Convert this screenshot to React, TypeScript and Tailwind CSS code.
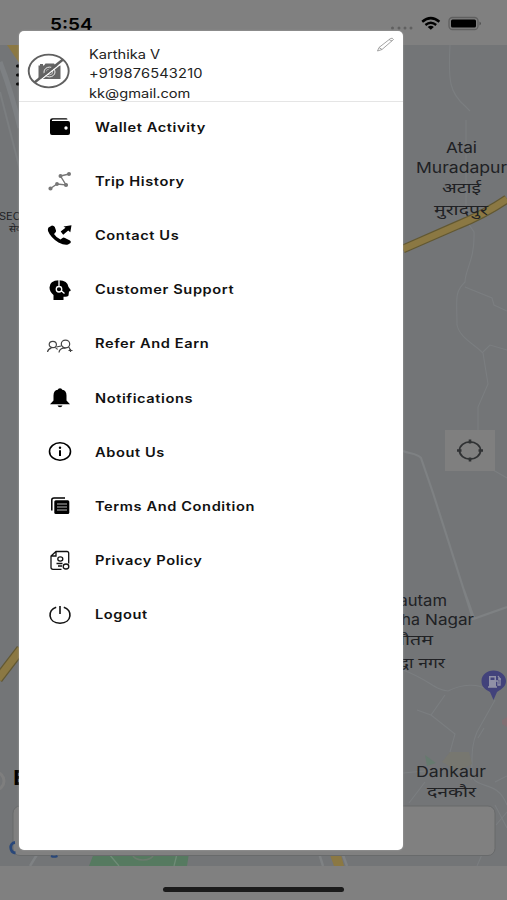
import type { ReactNode } from "react";

const mapFont = { fontFamily: '"Inter", "Noto Sans", "Noto Sans Devanagari", sans-serif' };

function MapLabel({ x, y, w, size = 15, children }: { x: number; y: number; w: number; size?: number; children: string }) {
  return (
    <text x={x} y={y} fontSize={size} textLength={w} lengthAdjust="spacingAndGlyphs" fill="#202124" style={mapFont}>
      {children}
    </text>
  );
}

function MapView() {
  return (
    <svg className="block h-[821px] w-[507px] bg-[#737577]" viewBox="0 45 507 821" fill="none">
      <path d="M0 62 Q11 90 20 128" stroke="#7d8083" strokeWidth="5" />
      <path d="M0 92 L20 170" stroke="#7b7e80" strokeWidth="2" />
      <path d="M7 45H20V64Z" fill="#8b7843" />
      <g stroke="#7b7e80" strokeWidth="1.1">
        <path d="M450 45C448 82 450 93 465 106L470 111M466 120V220L474 232C475 260 465 270 465 282C454 292 457 300 457 325C460 338 474 344 483 353L488 384L478 407V432" />
        <path d="M465 287L492 298L494 305L507 311M483 352L490 345L507 350M493 470L507 478" />
        <path d="M403 670C430 680 434 690 448 691C462 684 478 683 488 690M495 700L477 732C470 748 473 760 471 780M417 710L431 715L445 695M431 715L455 734L450 752M478 738L484 728M403 773L425 771M472 777C480 790 497 780 507 805M409 803L425 782" />
        <path d="M507 776L495 782M495 805L507 828M477 866L484 850M496 825L507 812" />
      </g>
      <path d="M403 451C410 454 417 453 421 458L433 493L448 540L473 619L507 607M464 590L474 618" stroke="#7e8183" strokeWidth="2.2" />
      <path d="M403 249L458 225Q485 214 507 199" stroke="#625832" strokeWidth="9" />
      <path d="M403 249L458 225Q485 214 507 199" stroke="#8b7843" strokeWidth="6.5" />
      <path d="M-2 679L21 649" stroke="#625832" strokeWidth="10" />
      <path d="M-2 679L21 649" stroke="#8b7843" strokeWidth="7.5" />
      <circle cx="-5" cy="781" r="9" stroke="#7e7e7e" strokeWidth="3" />
      <path d="M425 755L436 763L427 766Z" fill="#667a6f" />
      <path d="M442 762L450 752H469L472 764L458 771Z" fill="#777770" />
      <path d="M502 720L507 717V727L502 724Z" fill="#806f73" />

      <path d="M17.500 66H20M17.500 75H20M17.500 84H20" stroke="#000" strokeWidth="3" strokeLinecap="round" />
      <MapLabel x={-1} y={220} w={29} size={10}>SECT</MapLabel>
      <MapLabel x={9} y={232} w={18} size={10}>सेक्ट</MapLabel>
      <MapLabel x={446} y={153} w={31}>Atai</MapLabel>
      <MapLabel x={416} y={173} w={91}>Muradapur</MapLabel>
      <MapLabel x={442} y={193} w={39}>अटाई</MapLabel>
      <MapLabel x={434} y={215} w={54}>मुरादपुर</MapLabel>
      <MapLabel x={386} y={606} w={61}>Gautam</MapLabel>
      <MapLabel x={372} y={625} w={48}>Budha</MapLabel>
      <MapLabel x={425} y={625} w={49}>Nagar</MapLabel>
      <MapLabel x={394} y={645} w={39}>गौतम</MapLabel>
      <MapLabel x={385} y={668} w={60}>बुद्धा नगर</MapLabel>
      <MapLabel x={416} y={777} w={70}>Dankaur</MapLabel>
      <MapLabel x={427} y={797} w={49}>दनकौर</MapLabel>

      <rect x="445" y="430" width="50" height="41" fill="#7f7f7f" />
      <g stroke="#303234" strokeWidth="1.8">
        <ellipse cx="470" cy="450.500" rx="10.500" ry="8.700" />
        <path d="M470 439.500V443.500M470 457.500V461.500M457 450.500H461.500M478.500 450.500H483" strokeWidth="2.600" />
      </g>

      <path d="M493.500 700L490 692C484 689 481.500 686 481.500 681C481.500 675 487 670.500 493.500 670.500S506 675 506 681C506 686 502 689 497 692Z" fill="#42427b" />
      <path d="M489 676H496V687H489Z" fill="#9191a7" />
      <path d="M490.500 677.500H494.500V680H490.500Z" fill="#42427b" />
      <path d="M488 687H497M496 681H498V685H500V679L498 676M498 679H501" stroke="#9191a7" strokeWidth="1.300" />

      <path d="M94 853H189L187 866H89Z" fill="#567a60" />
      <path d="M109 854L119 866M177 854L174 866" stroke="#6f8c77" strokeWidth="1.300" />
      <ellipse cx="143" cy="855" rx="10" ry="5" stroke="#6b7b6e" strokeWidth="1.500" />
      <path d="M38 853L30 866M319 853L323 866M343 855L347 866" stroke="#7f8284" strokeWidth="2.500" />
      <path d="M330 855H341L344 866H334Z" fill="#8b7843" />
      <text x="13.500" y="785" fontSize="20" fontWeight="800" fill="#000" fontFamily="Inter, sans-serif">E</text>
      <rect x="13" y="806" width="482" height="49.500" rx="7" fill="#808080" stroke="#686a6b" strokeWidth="1" />
      <path d="M15 842.500C9 843 9.500 852.500 15.500 853" stroke="#294779" strokeWidth="2.800" />
      <path d="M51 856Q54 857.500 57.500 856" stroke="#294779" strokeWidth="2" />
    </svg>
  );
}

function StatusBar() {
  return (
    <header className="flex h-[45px] items-start bg-[#808080]">
      <span className="ml-[49.500px] mt-[13.500px] h-[21px] w-[43px] origin-left scale-x-[1.170] whitespace-nowrap text-[16.300px] font-semibold leading-[21px] text-black">5:54</span>
      <svg className="ml-auto mr-[22px] mt-[14px] h-[20px] w-[98px]" viewBox="387 14 98 20" fill="none">
        <g fill="#606060">
          <circle cx="392.500" cy="28" r="1.500" />
          <circle cx="399" cy="28" r="1.500" />
          <circle cx="405" cy="28" r="1.500" />
          <circle cx="411" cy="28" r="1.500" />
        </g>
        <path d="M422.200 21.700Q430.800 14.500 439.400 21.700" stroke="#000" strokeWidth="2.500" />
        <path d="M425.400 25Q430.800 20.500 436.200 25" stroke="#000" strokeWidth="2.300" />
        <path d="M427.700 26.900Q430.800 24.500 433.900 26.900L430.800 29.800Z" fill="#000" />
        <rect x="449" y="17.500" width="29" height="12" rx="3.500" stroke="#5f5f5f" strokeWidth="1.300" />
        <rect x="451" y="19.500" width="25" height="8" rx="1.500" fill="#000" />
        <path d="M479.500 21.500Q482.500 23.500 479.500 25.500Z" fill="#505050" />
      </svg>
    </header>
  );
}

const icons: Record<string, ReactNode> = {
  wallet: (
    <>
      <path d="M5.500 5.200H20Q21.500 5.200 21.500 6.600H7.500Q5.800 6.700 5.800 7.400T7.500 8H22Q24 8 24 10V20Q24 22 22 22H6Q4 22 4 20V7.500Q4 5.200 6.500 5.200Z" fill="#000" />
      <circle cx="20" cy="15" r="1.700" fill="#fff" />
    </>
  ),
  trip: (
    <g stroke="#777" fill="#777" strokeWidth="1.400">
      <path d="M4.500 21.500L11 17L20 18L14.500 9L23 7" fill="none" />
      <circle cx="4.500" cy="21.500" r="1.400" /><circle cx="11" cy="17" r="1.200" />
      <circle cx="20" cy="18" r="1.400" /><circle cx="14.500" cy="9" r="1.300" /><circle cx="23" cy="7" r="1.300" />
    </g>
  ),
  phone: (
    <path d="M2.500 6.500L6 4.500Q8 4.500 8.800 6L10 9.500Q10.400 10.700 9 12L8 13Q10.500 17 14.500 18.500L16.500 17Q17.500 16.200 19 17L24 19.500Q25.500 20.500 24.500 22L22 23.500Q18.500 24.500 12.500 21.500Q4.500 16.500 2 10Q1.500 7.500 2.500 6.500ZM14.700 10.500L19.500 6.800L17.500 5.500L25.500 4.300L24.300 11.300L22.200 9.500L17.200 13.800Z" fill="#000" />
  ),
  support: (
    <>
      <path d="M7.500 24V19Q3.500 15.500 3.500 11.500Q3.500 4.500 13 4.300Q21.500 4.500 22.500 11L24.700 14Q25 15.200 23 15.500L22.500 19.500Q22.200 20.800 17.500 20.800V24Z" fill="#000" />
      <path d="M13 4V10M13 10.500A2.700 2.700 0 1 0 13 16A2.700 2.700 0 1 0 13 10.500M15 14.500L18.500 17.500" stroke="#fff" strokeWidth="1.300" />
    </>
  ),
  refer: (
    <g stroke="#444" strokeWidth="1.200">
      <ellipse cx="6.800" cy="14.500" rx="3.600" ry="3.200" />
      <ellipse cx="19.500" cy="14" rx="4.200" ry="3.800" />
      <path d="M1.500 22Q2 18.800 5.500 17.800M8.500 17.500Q11 18 11.500 19.500M10.500 17L15 16M13 22.500Q13.500 19 17 18.200H19.500M22.500 17Q24 18 24 20M22.500 20.500H26.500M24.500 19V22" />
    </g>
  ),
  bell: (
    <>
      <path d="M4 20.300L7.500 16.500V11.500Q7.500 6.500 11.800 5.800Q12 4.300 14 4.300Q16 4.300 16.200 5.800Q20.500 6.500 20.500 11.500V16.500L24 20.300Z" fill="#000" />
      <path d="M11.500 21.500H16.500Q16 23.300 14 23.300Q12 23.300 11.500 21.500Z" fill="#000" />
    </>
  ),
  info: (
    <>
      <ellipse cx="14" cy="13.500" rx="10.500" ry="8.800" stroke="#000" strokeWidth="1.600" />
      <path d="M14 12.300V18" stroke="#000" strokeWidth="2" />
      <circle cx="14" cy="9.700" r="1.200" fill="#000" />
    </>
  ),
  terms: (
    <>
      <path d="M5.800 18.500V8Q5.800 6 8 6H19" stroke="#000" strokeWidth="1.500" />
      <rect x="8.300" y="8.200" width="15" height="13.800" rx="1.500" fill="#000" />
      <path d="M11 12H21M11 15H21M11 18H21" stroke="#ccc" strokeWidth=".9" />
    </>
  ),
  privacy: (
    <g stroke="#111" strokeWidth="1.300">
      <path d="M22.700 16.500V6Q22.700 4.500 21 4.500H10L5 9V20.500Q5 22.300 7 22.300H15.500M5 9H10V4.500" />
      <ellipse cx="14.300" cy="12" rx="2.500" ry="2.100" />
      <path d="M10.500 16.500H16.500M12 19H16" />
      <ellipse cx="20" cy="19.500" rx="2.800" ry="2.500" />
    </g>
  ),
  power: (
    <path d="M10.200 6.200C1.300 8.500 1.500 22 14 22.300C26.500 22 26.700 8.500 17.800 6.200M14 5V13" stroke="#111" strokeWidth="1.600" />
  ),
};

const menu = [
  ["wallet", "Wallet Activity"],
  ["trip", "Trip History"],
  ["phone", "Contact Us"],
  ["support", "Customer Support"],
  ["refer", "Refer And Earn"],
  ["bell", "Notifications"],
  ["info", "About Us"],
  ["terms", "Terms And Condition"],
  ["privacy", "Privacy Policy"],
  ["power", "Logout"],
];

function Profile() {
  return (
    <div className="flex h-[71px] border-b border-[#e5e5e5]">
      <svg className="ml-[7px] mt-[21px] h-[38px] w-[44px] shrink-0" viewBox="26 52 44 38" fill="none">
        <path d="M38.500 65.500H40V64H43V65.500H44L45.500 63.500H54L55.500 65.500H60.500V79H38.500Z" fill="#666" />
        <ellipse cx="49.500" cy="72" rx="5.500" ry="4.900" stroke="#eee" strokeWidth="1" />
        <ellipse cx="49.500" cy="72" rx="3.200" ry="2.800" stroke="#ccc" strokeWidth=".8" />
        <path d="M35.500 84L64.500 61" stroke="#fff" strokeWidth="1.300" />
        <path d="M34.500 82.500L63 59.500" stroke="#606060" strokeWidth="2.500" />
        <ellipse cx="48.700" cy="71" rx="20" ry="16.400" stroke="#606060" strokeWidth="1.900" />
      </svg>
      <div className="ml-[19px] mt-[13.500px] w-[200px] origin-left scale-x-[1.170] whitespace-nowrap text-[12.500px] leading-[19.500px] text-[#222]">
        <p>Karthika V</p>
        <p className="tracking-[0.150px]">+919876543210</p>
        <p>kk@gmail.com</p>
      </div>
      <svg className="ml-auto mr-[8px] mt-[5px] h-[18px] w-[20px]" viewBox="375 36 20 18" fill="none">
        <path d="M377.500 51L379 47.500L390.500 38.500Q392.500 37.500 393.500 39.500L382 49.500ZM379 47.500L382 49.500M389 39.500L392 41" stroke="#999" strokeWidth=".9" />
      </svg>
    </div>
  );
}

export default function App() {
  return (
    <div className="relative h-[900px] w-[507px] overflow-hidden bg-[#808080] font-[Inter,'Liberation_Sans',sans-serif]">
      <StatusBar />
      <MapView />
      <footer className="flex h-[34px] justify-center pt-[21px]">
        <div className="h-[5px] w-[181px] rounded-full bg-[#1b1b1b]" />
      </footer>
      <aside className="absolute left-[19px] top-[31px] h-[819px] w-[384px] overflow-hidden rounded-[5px] bg-white shadow-[0_0_2px_#aaa]">
        <Profile />
        <nav className="flex flex-col">
          {menu.map(([icon, label], i) => (
            <a key={label} className={i === 0 ? "flex h-[50px] items-center pl-[26.500px]" : "mt-[4.200px] flex h-[50px] items-center pl-[26.500px]"}>
              <svg className="h-7 w-7 shrink-0" viewBox="0 0 28 28" fill="none">{icons[icon]}</svg>
              <span className="relative top-[0.600px] ml-[21.500px] origin-left scale-x-[1.170] whitespace-nowrap text-[12.500px] font-semibold leading-5 tracking-[0.500px] text-[#111]">{label}</span>
            </a>
          ))}
        </nav>
      </aside>
    </div>
  );
}
